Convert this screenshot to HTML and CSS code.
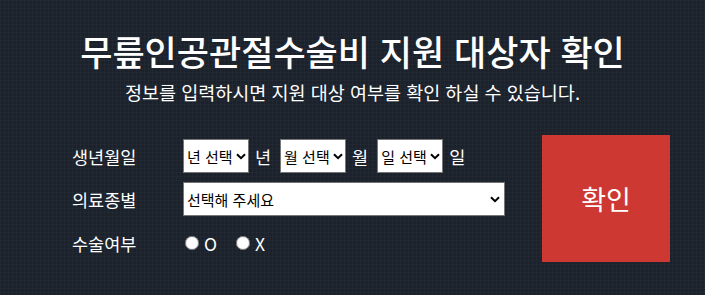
FILE: index.html
```html
<!DOCTYPE html>
<html lang="ko">
<head>
<meta charset="utf-8">
<title>무릎인공관절수술비 지원 대상자 확인</title>
<link rel="stylesheet" href="styles.css">
</head>
<body>
<main class="page">
  <h1 class="title">무릎인공관절수술비 지원 대상자 확인</h1>
  <p class="subtitle">정보를 입력하시면 지원 대상 여부를 확인 하실 수 있습니다.</p>
  <div class="panel">
    <form class="form">
      <div class="row">
        <span class="label">생년월일</span>
        <div class="fields">
          <select class="select select-sm"><option>년 선택</option></select>
          <span class="unit">년</span>
          <select class="select select-sm"><option>월 선택</option></select>
          <span class="unit">월</span>
          <select class="select select-sm"><option>일 선택</option></select>
          <span class="unit">일</span>
        </div>
      </div>
      <div class="row">
        <span class="label">의료종별</span>
        <div class="fields">
          <select class="select select-lg"><option>선택해 주세요</option></select>
        </div>
      </div>
      <div class="row row-radio">
        <span class="label">수술여부</span>
        <div class="fields radios">
          <label class="radio"><input type="radio" name="op"><span>O</span></label>
          <label class="radio"><input type="radio" name="op"><span>X</span></label>
        </div>
      </div>
    </form>
    <button class="confirm" type="button">확인</button>
  </div>
</main>
</body>
</html>
```
FILE: styles.css
```css
html, body {
  margin: 0;
  padding: 0;
}
body {
  background-color: #1b222c;
  background-image:
    linear-gradient(rgba(255,255,255,0.025) 1px, transparent 1px),
    linear-gradient(90deg, rgba(255,255,255,0.025) 1px, transparent 1px);
  background-size: 4px 4px;
  color: #ffffff;
  font-family: "Noto Sans CJK KR", "Noto Sans", sans-serif;
  width: 705px;
  height: 295px;
  overflow: hidden;
}
.page {
  padding-top: 28px;
}
.title {
  margin: 0;
  text-align: center;
  font-size: 35px;
  font-weight: 500;
  line-height: 46px;
}
.subtitle {
  margin: 5px 0 0;
  text-align: center;
  font-size: 18.5px;
  line-height: 26px;
}
.panel {
  display: flex;
  align-items: flex-start;
  padding-left: 72px;
  margin-top: 30px;
}
.form {
  display: flex;
  flex-direction: column;
  gap: 9px;
  margin-top: 4px;
}
.row {
  display: flex;
  align-items: center;
  height: 34px;
}
.row-radio {
  margin-top: 1px;
}
.label {
  width: 111px;
  font-size: 17.5px;
}
.fields {
  display: flex;
  align-items: center;
}
.select {
  -webkit-appearance: none;
  appearance: none;
  height: 34px;
  font-family: "Noto Sans CJK KR", sans-serif;
  font-size: 15px;
  color: #000;
  background-color: #fff;
  background-image: url("data:image/svg+xml,%3Csvg xmlns='http://www.w3.org/2000/svg' width='10' height='7' viewBox='0 0 10 7'%3E%3Cpath d='M1 1.2 L5 5.2 L9 1.2' fill='none' stroke='%23000' stroke-width='2'/%3E%3C/svg%3E");
  background-repeat: no-repeat;
  background-size: 10px 7px;
  border: 1px solid #767676;
  border-radius: 0;
  padding: 0 0 0 3px;
  outline: none;
}
.select-sm {
  width: 66px;
  background-position: right 2px center;
}
.select-lg {
  width: 322px;
  background-position: right 4px center;
}
.unit {
  font-size: 17.5px;
  margin: 0 9px 0 6px;
}
.radio {
  display: flex;
  align-items: center;
  font-size: 17.5px;
  margin-right: 17px;
}
.radio input {
  width: 14px;
  height: 14px;
  margin: 0 5px 0 2px;
}
.confirm {
  margin-left: 37px;
  width: 128px;
  height: 127px;
  border: none;
  background: #cd3832;
  color: #ffffff;
  font-family: "Noto Sans CJK KR", sans-serif;
  font-size: 27px;
  padding: 0;
}
```
